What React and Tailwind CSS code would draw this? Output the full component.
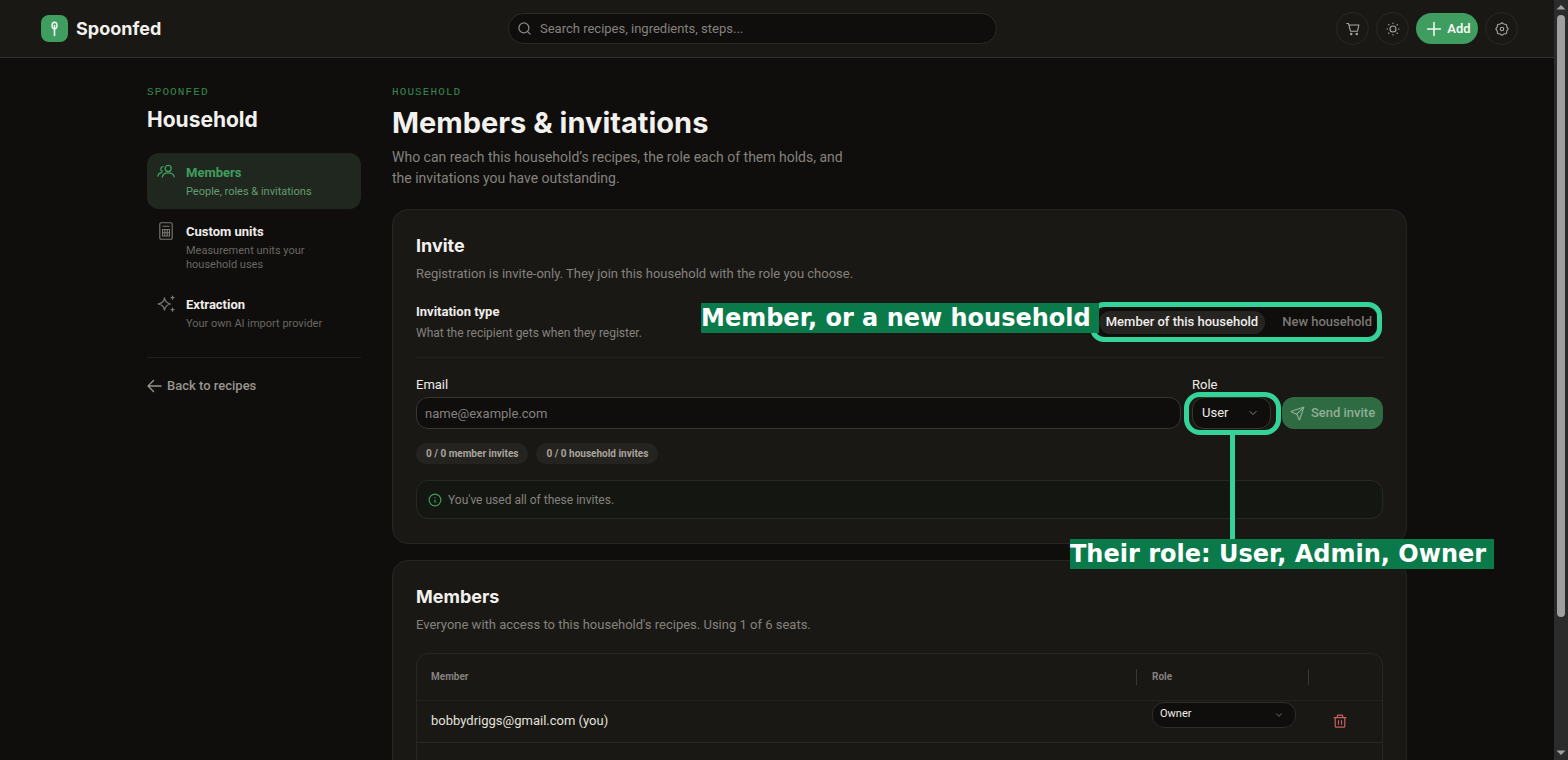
import { useState } from "react";
import { ChevronDown, Info, Plus, Search, Send } from "lucide-react";

const navItems = [
  { id: "members", title: "Members", text: "People, roles & invitations", Icon: PeopleIcon },
  { id: "units", title: "Custom units", text: "Measurement units your household uses", Icon: UnitsIcon },
  { id: "extraction", title: "Extraction", text: "Your own AI import provider", Icon: SparklesIcon },
];

function SpoonIcon() {
  return (
    <svg viewBox="0 0 27 27" className="size-[27px]" fill="none" stroke="#f4f7f3" aria-hidden="true">
      <ellipse cx="13.5" cy="10.5" rx="2.5" ry="3.2" strokeWidth="1.4" />
      <path d="M13.5 10.5v10" strokeWidth="1.6" strokeLinecap="round" />
    </svg>
  );
}

function PeopleIcon() {
  return (
    <svg viewBox="0 0 18 18" className="size-[18px]" fill="none" stroke="currentColor" strokeWidth="1.3" strokeLinecap="round" strokeLinejoin="round" aria-hidden="true">
      <circle cx="11.2" cy="5.4" r="3" />
      <path d="M5.2 14.2c.5-3.2 2.9-4.4 6-4.4s5.500 1.200 6 4" />
      <path d="M6 3.600a2.300 2.300 0 0 0-.6 4.500" />
      <path d="M.9 13c.3-2 1.500-3 3.800-3.600" />
    </svg>
  );
}

function UnitsIcon() {
  return (
    <svg viewBox="0 0 18 18" className="size-[18px]" fill="none" stroke="currentColor" strokeWidth="1.1" aria-hidden="true">
      <rect x="2.8" y=".7" width="12.4" height="16.6" rx="1.3" />
      <path d="M5.500 4.200h7M5.500 7.500h7v6.500h-7zM5.500 10.800h7M7.800 7.500v6.500M10.200 7.500v6.500" />
    </svg>
  );
}

function SparklesIcon() {
  return (
    <svg viewBox="0 0 18 18" className="size-[18px]" fill="none" stroke="currentColor" strokeWidth="1.2" strokeLinejoin="round" strokeLinecap="round" aria-hidden="true">
      <path d="M7.500 2.800c.8 3.900 2 5.100 6 6.200-4 1.100-5.200 2.300-6 6.200-.8-3.900-2-5.100-6.500-6.200 4.500-1.100 5.700-2.300 6.500-6.200z" />
      <path d="M15.500 1.200v3M14 2.700h3M15.500 13.200v3M14 14.700h3" />
    </svg>
  );
}

function ArrowIcon() {
  return (
    <svg viewBox="0 0 15 14" className="h-3.5 w-[15px]" fill="none" stroke="currentColor" strokeWidth="1.4" strokeLinecap="round" strokeLinejoin="round" aria-hidden="true">
      <path d="M14 7H1M6.500 1.500L1 7l5.500 5.500" />
    </svg>
  );
}

function CartIcon() {
  return (
    <svg viewBox="0 0 14 14" className="size-[14px]" fill="none" stroke="currentColor" strokeWidth="1.1" strokeLinecap="round" strokeLinejoin="round" aria-hidden="true">
      <path d="M.8 1.500h1.700l2 7.700h7l1.400-6.200H3" />
      <circle cx="5.200" cy="12" r=".7" />
      <circle cx="10.800" cy="12" r=".7" />
    </svg>
  );
}

function SunIcon() {
  return (
    <svg viewBox="0 0 14 14" className="size-[14px]" fill="none" stroke="currentColor" strokeWidth="1.1" strokeLinecap="round" aria-hidden="true">
      <circle cx="7" cy="7" r="3" />
      <path d="M7 1v.5M7 12.500v.5M1 7h.5M12.500 7h.5M2.600 2.600l.4.4M11 11l.4.4M2.600 11.400l.4-.4M11 3l.4-.4" />
    </svg>
  );
}

function GearIcon() {
  return (
    <svg viewBox="0 0 14 14" className="size-[14px]" fill="none" stroke="currentColor" strokeWidth="1.1" strokeLinejoin="round" aria-hidden="true">
      <path d="M5.800 1.700Q7 .1 8.200 1.700Q8.900 2.400 9.900 2.300Q11.900 2.100 11.700 4.100Q11.600 5.100 12.300 5.800Q13.900 7 12.300 8.200Q11.600 8.900 11.700 9.900Q11.900 11.900 9.900 11.700Q8.900 11.600 8.200 12.300Q7 13.900 5.800 12.300Q5.100 11.600 4.100 11.700Q2.100 11.900 2.300 9.900Q2.400 8.900 1.700 8.200Q.1 7 1.700 5.800Q2.400 5.100 2.300 4.100Q2.100 2.100 4.100 2.300Q5.100 2.400 5.800 1.700Z" />
      <circle cx="7" cy="7" r="1.700" />
    </svg>
  );
}

function TrashIcon() {
  return (
    <svg viewBox="0 0 14 14" className="size-[14px]" fill="none" stroke="currentColor" strokeWidth="1.2" strokeLinecap="round" strokeLinejoin="round" aria-hidden="true">
      <path d="M1 3.700h12M4 3.500l.6-2.300h4.800l.6 2.300M2.200 3.900v8c0 .8.4 1.300 1.200 1.300h7.200c.8 0 1.200-.5 1.200-1.300v-8M5.500 6.700v3.500M8.500 6.700v3.500" />
    </svg>
  );
}

function RoundButton({ label, children }) {
  return (
    <button type="button" aria-label={label} className="flex size-[33px] items-center justify-center rounded-full border border-[#2a2824] text-[#aaa7a2]">
      {children}
    </button>
  );
}

function Header() {
  return (
    <header className="flex h-[58px] shrink-0 items-center justify-between border-b border-[#302e2b] bg-[#191814] pr-9 pl-[41px]">
      <a href="#home" className="flex w-32 items-center gap-2">
        <span className="rounded-lg bg-[#3f9e5f]"><SpoonIcon /></span>
        <span className="font-['Inter'] text-lg font-bold text-[#f3f1ee]">Spoonfed</span>
      </a>
      <label className="flex h-[31px] w-[489px] items-center gap-2 rounded-full border border-[#2c2a27] bg-[#0f0e0c] px-2 text-[#8c8a86]">
        <Search size={15} strokeWidth={2} />
        <input type="search" aria-label="Search" placeholder="Search recipes, ingredients, steps..." className="min-w-0 flex-1 bg-transparent text-[13px] outline-none placeholder:text-[#85827e]" />
      </label>
      <div className="flex items-center gap-[7px]">
        <RoundButton label="Shopping list"><CartIcon /></RoundButton>
        <RoundButton label="Theme"><SunIcon /></RoundButton>
        <button type="button" className="flex h-[31px] w-[62px] items-center justify-center gap-0.5 rounded-full bg-[#3f9e5f] text-[13px] font-semibold text-[#f4f7f3]">
          <Plus size={22} strokeWidth={1.7} />
          Add
        </button>
        <RoundButton label="Settings"><GearIcon /></RoundButton>
      </div>
    </header>
  );
}

function Sidebar() {
  const [active, setActive] = useState("members");

  return (
    <aside>
      <p className="font-['Liberation_Mono',monospace] text-[11px] leading-4 tracking-widest text-[#388653]">SPOONFED</p>
      <h2 className="mt-2 font-['Inter'] text-[21px] leading-6 font-bold text-[#f3f1ee]">Household</h2>
      <nav className="mt-[21px] flex flex-col gap-[3px]">
        {navItems.map(({ id, title, text, Icon }) => (
          <a
            key={id}
            href={"#" + id}
            onClick={() => setActive(id)}
            className={`flex gap-[11px] rounded-xl px-2.5 py-2.5 ${active === id ? "bg-[#20271e] text-[#3f9e5f]" : "text-[#7b7874]"}`}
          >
            <Icon />
            <span className="min-w-0 flex-1">
              <span className={`block text-[13px] leading-5 font-bold ${active === id ? "" : "text-[#efedea]"}`}>{title}</span>
              <span className={`mt-0.5 block max-w-[150px] text-[11px] leading-[14px] ${active === id ? "text-[#659b74]" : "text-[#696763]"}`}>{text}</span>
            </span>
          </a>
        ))}
      </nav>
      <div className="mt-4 border-t border-[#22211e] pt-[18px]">
        <a href="#recipes" className="flex items-center gap-[5px] text-[13px] leading-5 font-medium text-[#98958f]">
          <ArrowIcon />
          Back to recipes
        </a>
      </div>
    </aside>
  );
}

function Card({ title, text, children }) {
  return (
    <section className="rounded-2xl border border-[#282622] bg-[#191814] px-[23px] pt-6 pb-6">
      <h2 className="font-['Inter'] text-lg leading-6 font-bold text-[#f3f1ee]">{title}</h2>
      <p className="mt-1.5 text-[13px] leading-5 text-[#85827e]">{text}</p>
      {children}
    </section>
  );
}

function Callout({ className, children }) {
  return (
    <div className={`pointer-events-none absolute bg-[#0b7a4b] pr-2 font-['DejaVu_Sans',sans-serif] text-2xl leading-[30px] font-bold whitespace-nowrap text-white ${className}`}>
      {children}
    </div>
  );
}

function InvitationType() {
  const [type, setType] = useState("member");
  const options = [
    { id: "member", label: "Member of this household" },
    { id: "household", label: "New household" },
  ];

  return (
    <div className="mt-[18px] flex items-start justify-between border-b border-[#22211d] pb-[13px]">
      <div>
        <h3 className="text-[13px] leading-5 font-bold text-[#efedea]">Invitation type</h3>
        <p className="text-xs leading-[22px] text-[#85827e]">What the recipient gets when they register.</p>
      </div>
      <div className="relative z-10 mt-1 mr-1">
        <div className="flex h-8 items-center gap-2.5 rounded-full bg-[#0f0e0c] pl-1">
          {options.map((o) => (
            <button
              key={o.id}
              type="button"
              aria-pressed={type === o.id}
              onClick={() => setType(o.id)}
              className={`h-[23px] rounded-full px-[7px] text-[13px] font-medium ${type === o.id ? "bg-[#252421] text-[#efedea]" : "text-[#7b7874]"}`}
            >
              {o.label}
            </button>
          ))}
        </div>
        {/* callout */}
        <div className="pointer-events-none absolute -inset-y-1 -right-[3px] -left-[5px] rounded-[14px] border-5 border-[#34d399]" />
        <Callout className="-top-[3px] right-[calc(100%-4px)]">Member, or a new household</Callout>
      </div>
    </div>
  );
}

function InviteForm() {
  const [email, setEmail] = useState("");
  const [role, setRole] = useState("User");

  return (
    <form className="mt-[17px] flex items-end gap-[11px]" onSubmit={(e) => e.preventDefault()}>
      <div className="flex-1">
        <label htmlFor="email" className="block text-[13px] leading-5 text-[#efedea]">Email</label>
        <input
          id="email"
          type="email"
          value={email}
          onChange={(e) => setEmail(e.target.value)}
          placeholder="name@example.com"
          className="mt-0.5 block h-8 w-full rounded-xl border border-[#383632] bg-[#0f0e0c] px-2 text-[13px] text-[#efedea] outline-none placeholder:text-[#85827e]"
        />
      </div>
      <div>
        <label htmlFor="role" className="block text-[13px] leading-5 text-[#efedea]">Role</label>
        <div className="relative z-10 mt-0.5 w-[79px]">
          <select id="role" value={role} onChange={(e) => setRole(e.target.value)} className="block h-8 w-full appearance-none rounded-xl border border-[#383632] bg-[#0f0e0c] px-[9px] text-[13px] text-[#efedea]">
            <option>User</option>
            <option>Admin</option>
            <option>Owner</option>
          </select>
          <ChevronDown size={12} strokeWidth={2} className="pointer-events-none absolute top-2.5 right-3 text-[#85827e]" />
          {/* callout */}
          <div className="pointer-events-none absolute -top-[5px] -right-2.5 -bottom-1.5 -left-2 rounded-2xl border-5 border-[#34d399]" />
          <div className="pointer-events-none absolute top-[38px] left-[38px] h-[104px] w-[5px] bg-[#34d399]" />
          <Callout className="top-[142px] -left-[122px]">Their role: User, Admin, Owner</Callout>
        </div>
      </div>
      <button type="submit" disabled className="flex h-8 w-[101px] items-center justify-center gap-1.5 rounded-xl bg-[#2f6b42] text-[13px] font-medium text-[#8eae95]">
        <Send size={15} strokeWidth={1.8} />
        Send invite
      </button>
    </form>
  );
}

function MembersTable() {
  const [role, setRole] = useState("Owner");

  return (
    <div className="mt-[18px] overflow-hidden rounded-xl border border-[#282622]">
      <table className="w-full table-fixed text-left">
        <thead className="text-[10px] text-[#85827e]">
          <tr className="h-[46px] border-b border-[#24221f]">
            <th className="pl-3.5 font-bold">Member</th>
            <th className="w-[188px] font-bold">
              <div className="mr-[15px] flex h-4 items-center border-x border-[#3a3834] pl-[15px]">Role</div>
            </th>
            <th className="w-[58px]" aria-label="Actions" />
          </tr>
        </thead>
        <tbody>
          <tr className="h-[42px] border-b border-[#2b2925]">
            <td className="pl-3.5 text-[13px] text-[#e2e0dc]">bobbydriggs@gmail.com (you)</td>
            <td className="pt-px pl-4 align-top">
              <div className="relative w-36">
                <select aria-label="Member role" value={role} onChange={(e) => setRole(e.target.value)} className="block h-[26px] w-full appearance-none rounded-xl border border-[#302e2a] bg-[#0f0e0c] px-[7px] text-[11px] text-[#efedea]">
                  <option>Owner</option>
                  <option>Admin</option>
                  <option>User</option>
                </select>
                <ChevronDown size={10} strokeWidth={2} className="pointer-events-none absolute top-2 right-3 text-[#85827e]" />
              </div>
            </td>
            <td>
              <button type="button" aria-label="Remove member" className="block pl-[9px] text-[#c9605e]"><TrashIcon /></button>
            </td>
          </tr>
          <tr className="h-[42px]"><td colSpan={3} /></tr>
        </tbody>
      </table>
    </div>
  );
}

function Scrollbar() {
  return (
    <div className="flex w-3.5 shrink-0 flex-col items-center bg-[#2b2b2b]" aria-hidden="true">
      <svg viewBox="0 0 14 15" className="h-[15px] w-3.5" fill="#a0a0a0"><path d="M7 5l4.500 4.500h-9z" /></svg>
      <div className="w-2 flex-[602] rounded-full bg-[#9f9f9f]" />
      <div className="flex-[128]" />
      <svg viewBox="0 0 14 15" className="h-[15px] w-3.5" fill="#a0a0a0"><path d="M7 10l4.500-4.500h-9z" /></svg>
    </div>
  );
}

function App() {
  return (
    <div className="flex h-screen bg-[#0f0e0c] font-['Roboto','Noto_Sans',sans-serif]">
      <div className="flex min-w-0 flex-1 flex-col overflow-hidden">
        <Header />
        <main className="mx-auto grid w-full max-w-[1260px] grid-cols-[214px_minmax(0,1fr)] gap-[31px] pt-[26px]">
          <Sidebar />
          <div>
            <p className="font-['Liberation_Mono',monospace] text-[11px] leading-4 tracking-widest text-[#388653]">HOUSEHOLD</p>
            <h1 className="mt-[5px] font-['Inter'] text-[29px] leading-9 font-bold text-[#f3f1ee]">Members & invitations</h1>
            <p className="mt-1.5 mb-5 max-w-[470px] text-sm leading-[21px] text-[#85827e]">
              Who can reach this household’s recipes, the role each of them holds, and the invitations you have outstanding.
            </p>

            <div className="flex flex-col gap-4">
              <Card title="Invite" text="Registration is invite-only. They join this household with the role you choose.">
                <InvitationType />
                <InviteForm />
                <div className="mt-3.5 flex gap-2 text-[10px] font-bold text-[#aaa39c]">
                  <span className="rounded-full bg-[#252320] px-2.5 py-[3px] leading-[15px]">0 / 0 member invites</span>
                  <span className="rounded-full bg-[#252320] px-2.5 py-[3px] leading-[15px]">0 / 0 household invites</span>
                </div>
                <div className="mt-4 flex h-[39px] items-center gap-1.5 rounded-xl border border-[#272a24] bg-[#141611] px-[11px] text-xs text-[#85827e]">
                  <Info size={14} strokeWidth={2} className="text-[#3f9e5f]" />
                  You've used all of these invites.
                </div>
              </Card>

              <Card title="Members" text="Everyone with access to this household's recipes. Using 1 of 6 seats.">
                <MembersTable />
              </Card>
            </div>
          </div>
        </main>
      </div>
      <Scrollbar />
    </div>
  );
}

export default App;
